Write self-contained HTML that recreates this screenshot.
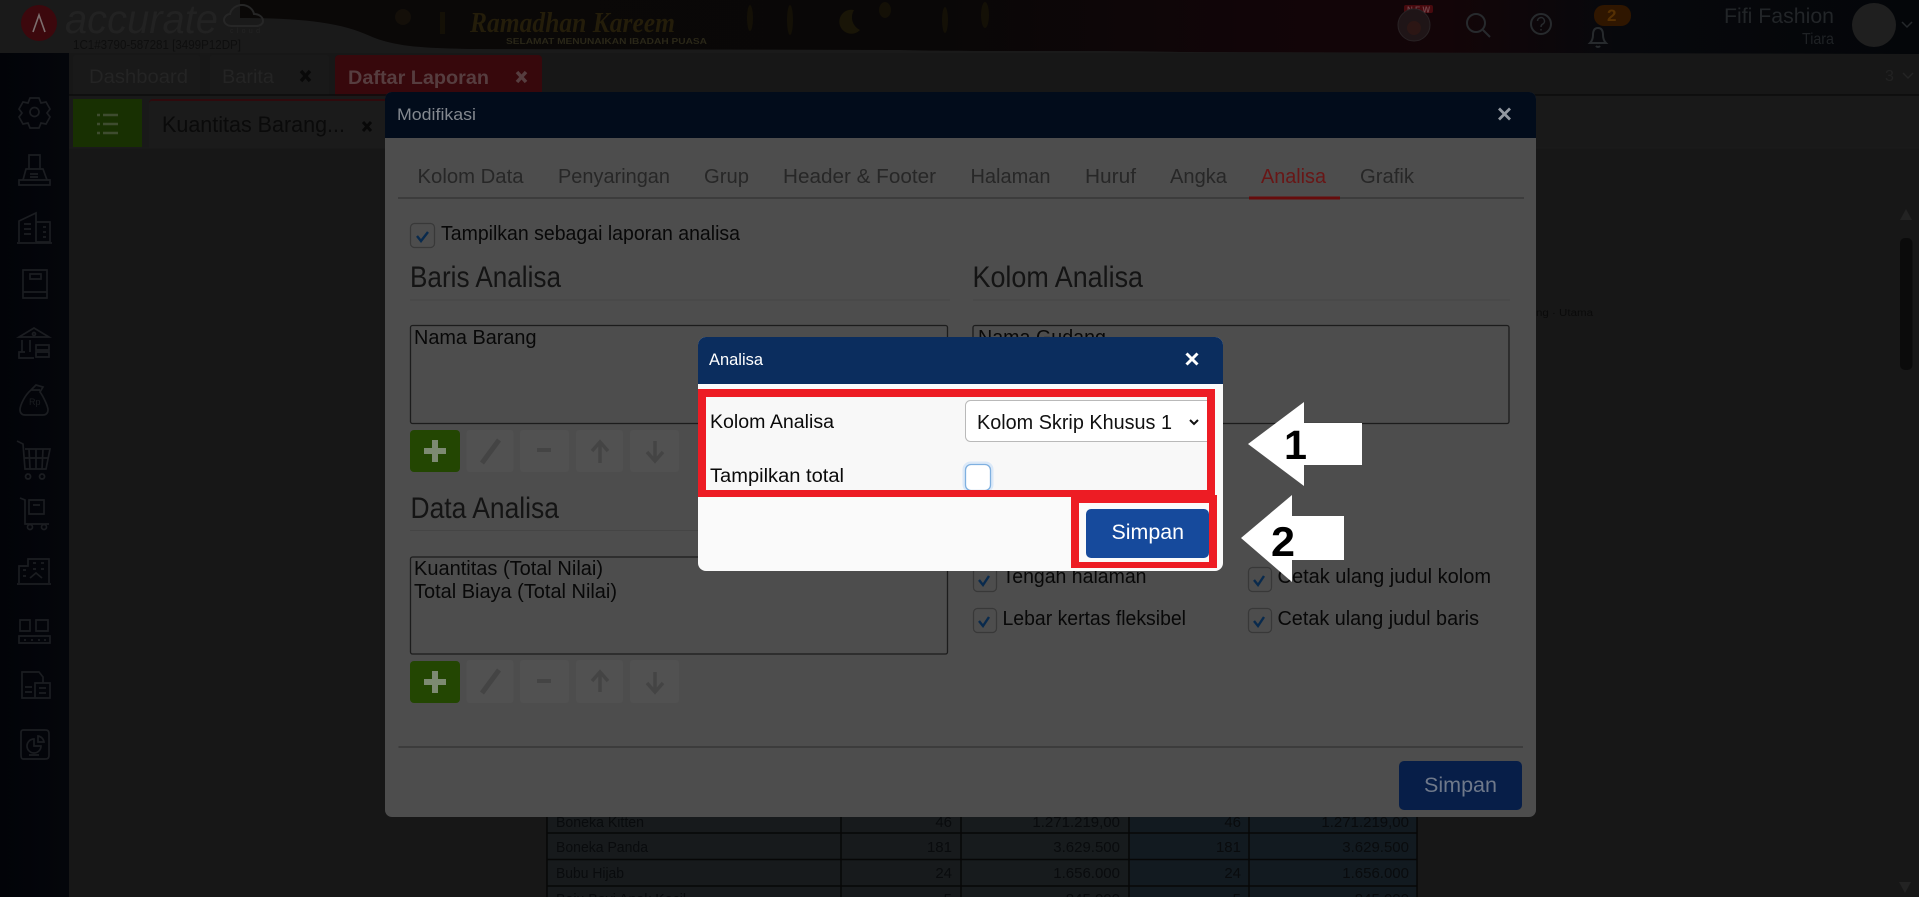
<!DOCTYPE html>
<html lang="id">
<head>
<meta charset="utf-8">
<title>Analisa</title>
<style>
html,body{margin:0;padding:0;background:#171717;width:1919px;height:897px;overflow:hidden}
svg{display:block;font-family:"Liberation Sans",sans-serif}
</style>
</head>
<body>
<svg xmlns="http://www.w3.org/2000/svg" width="1919" height="897" viewBox="0 0 1919 897">
<defs>
<linearGradient id="ban" x1="0" x2="1" y1="0" y2="0">
<stop offset="0" stop-color="#0a0807"/><stop offset=".42" stop-color="#090707"/><stop offset=".6" stop-color="#110508"/><stop offset=".72" stop-color="#130508"/><stop offset=".82" stop-color="#07080c"/><stop offset="1" stop-color="#040609"/>
</linearGradient>
<linearGradient id="side" x1="0" x2="1" y1="0" y2="0"><stop offset="0" stop-color="#020308"/><stop offset="1" stop-color="#04060b"/></linearGradient>
<clipPath id="tbl"><rect x="540" y="817" width="890" height="80"/></clipPath>
<clipPath id="d1"><rect x="706" y="397" width="501" height="93"/></clipPath>
</defs>

<!-- page -->
<rect width="1919" height="897" fill="#171717"/>
<rect x="69" y="95" width="1850" height="53" fill="#191919"/>
<line x1="69" y1="148" x2="1919" y2="148" fill="none" stroke="#1b1b1b"/>

<!-- top bar -->
<rect width="1919" height="53" fill="#1a1a1a"/>
<path d="M240 18C300 18 340 22 370 36C395 47 425 48 470 49L900 50C960 52 1100 50 1180 52L1919 54V0H310L240 0Z" fill="url(#ban)"/>
<circle cx="39" cy="23" r="18" fill="#3c080d"/>
<path d="M33 32L39 15L45 32" fill="none" stroke="#7d6e6e" stroke-width="1.600"/>
<text x="65" y="33" font-size="41" font-style="italic" fill="#222" textLength="153" lengthAdjust="spacingAndGlyphs">accurate</text>
<path d="M232 26c-5 0-8-3-8-6 0-3 3-6 6-6 1-5 6-9 12-9 6 0 11 4 12 9 5 0 9 3 9 7 0 3-3 5-7 5z" fill="none" stroke="#262626" stroke-width="2"/>
<text x="230" y="33" font-size="7" fill="#242424" textLength="30">cloud</text>
<text x="73" y="49" font-size="12.500" fill="#0e0e0e" textLength="168" lengthAdjust="spacingAndGlyphs">1C1#3790-587281 [3499P12DP]</text>
<circle cx="403" cy="17" r="8" fill="#17120a" opacity=".8"/><rect x="440" y="12" width="5" height="22" fill="#141006"/>
<text x="470" y="32" font-size="29" font-weight="bold" font-style="italic" font-family="Liberation Serif, serif" fill="#241d0a" textLength="205" lengthAdjust="spacingAndGlyphs">Ramadhan Kareem</text>
<text x="506" y="44" font-size="8.500" font-weight="bold" fill="#2a2718" textLength="201" lengthAdjust="spacingAndGlyphs">SELAMAT MENUNAIKAN IBADAH PUASA</text>
<g fill="#141006"><ellipse cx="750" cy="18" rx="3" ry="13"/><ellipse cx="790" cy="20" rx="3" ry="15"/><ellipse cx="885" cy="10" rx="6" ry="8"/><ellipse cx="945" cy="20" rx="3" ry="13"/><ellipse cx="985" cy="15" rx="4" ry="13"/></g>
<path d="M854 10a12 12 0 1 0 6 20a14 14 0 0 1-6-20z" fill="#191507"/>

<rect x="1404" y="5" width="29" height="8" rx="2" fill="#480a0e"/>
<text x="1407" y="12.500" font-size="8" font-weight="bold" fill="#70444a" textLength="23">NEW</text>
<circle cx="1414" cy="25" r="16" fill="#1f1517" stroke="#292325"/>
<circle cx="1414" cy="28" r="7" fill="#2c1614"/>
<g fill="none" stroke="#272a2d" stroke-width="2">
<circle cx="1476" cy="23" r="9"/><path d="M1483 30l7 7"/>
<circle cx="1541" cy="24" r="10"/>
<path d="M1537.500 21a3.500 3.500 0 1 1 5 3.200c-1 .6-1.500 1.300-1.500 2.800M1541 29v1.500" stroke-width="1.500"/>
<path d="M1590 43c2-2 3-4 3-8 0-5 2-7 5-7s5 2 5 7c0 4 1 6 3 8zM1596 46a2.500 2.500 0 0 0 4 0"/>
</g>
<rect x="1594" y="5" width="37" height="21" rx="10" fill="#2f1600"/>
<text x="1607" y="21" font-size="17" font-weight="bold" fill="#553003">2</text>
<text x="1724" y="23" font-size="21" fill="#222528" textLength="110" lengthAdjust="spacingAndGlyphs">Fifi Fashion</text>
<text x="1802" y="44" font-size="16" fill="#1f2225" textLength="32" lengthAdjust="spacingAndGlyphs">Tiara</text>
<ellipse cx="1874" cy="25" rx="22" ry="22" fill="#1f1f1f"/>
<path d="M1902 22l5 5 5-5" fill="none" stroke="#25282b" stroke-width="1.500"/>

<!-- sidebar -->
<rect x="0" y="53" width="69" height="844" fill="url(#side)"/>
<g fill="none" stroke="#1b1d21" stroke-width="1.700">
<path d="M30 98l9 0 2 5 5-1 4 7-3 4 3 4-4 7-5-1-2 5h-9l-2-5-5 1-4-7 3-4-3-4 4-7 5 1z"/><circle cx="34.500" cy="112" r="4.500"/>
<path d="M29 155h11v14H29zM26 169h17l4 11H23l3-11zM19 180h31v5H19zM30 174h8M30 177h8"/>
<path d="M19 242v-21l17-8v29M36 222h14v20H36M17 243h35M24 224h7M24 229h7M24 234h7M43 227h3M43 232h3M43 237h3"/>
<path d="M23 270h24v28H23zM23 292h24M30 274h11v5H30z"/>
<g transform="translate(0 -6)">
<path d="M19 343l15-9 15 9zM22 346v12M30 346v12M25 358h-6v6h15M36 351h13v5H36zM36 358h13v5H36z"/><circle cx="34" cy="340" r="1.500"/>
</g>
<path d="M31 390l5-5 7 2-3 5c3 4 8 14 8 18 0 3-2 5-5 5H25c-3 0-5-2-5-5 0-5 5-15 11-20zM31 390h9"/>
<path d="M17 441l6 3 2 25h21l4-20H25M29 449l1 20M36 449v20M43 449l-1 20M24 458h24M28 474a2.500 2.500 0 1 0 .1 0M42 474a2.500 2.500 0 1 0 .1 0"/>
<path d="M20 498l5 2v24h24M29 500h15v14H29zM33 505h7"/><circle cx="30" cy="527" r="2.500"/><circle cx="44" cy="527" r="2.500"/>
<path d="M19 583v-17h9v-7h21v24M17 584h34M23 570h3M23 576h3M33 563h3M41 563h3M33 569h3M41 569h3M30 578l6-5 6 5"/>
<path d="M20 620h10v11H20zM36 620h12v11H36zM19 636h31v7H19zM24 640h2M31 640h2M38 640h2M44 640h2"/>
<path d="M22 672h17l4 5v6h-8v15H22zM35 683h15v15H35zM25 687h7M25 692h7M39 688h7M39 693h7"/>
<path d="M23 730h22c3 0 4 1 4 4v21c0 3-1 4-4 4H23c-1 0-2-1-2-4v-23c0-1 1-2 2-2zM29 755h10"/><path d="M34 739a7 7 0 1 0 7 7h-7zM38 736a7 7 0 0 1 6 6h-6z"/>
</g>
<text x="29" y="405" font-size="9" fill="#1b1d21">Rp</text>

<!-- tabs -->
<path d="M73 95V57a2 2 0 0 1 2-2h123a2 2 0 0 1 2 2v38z" fill="#191919"/>
<path d="M210 95V57a2 2 0 0 1 2-2h115a2 2 0 0 1 2 2v38z" fill="#191919"/>
<path d="M335 96V59a4 4 0 0 1 4-4h199a4 4 0 0 1 4 4v37z" fill="#37080c"/>
<line x1="69" y1="95" x2="1919" y2="95" stroke="#0c0c0c" stroke-width="1.500"/>
<text x="89" y="83" font-size="19" fill="#242424" textLength="99" lengthAdjust="spacingAndGlyphs">Dashboard</text>
<text x="222" y="83" font-size="19" fill="#242424" textLength="52" lengthAdjust="spacingAndGlyphs">Barita</text>
<path d="M301 71l9 10M310 71l-9 10" stroke="#090909" stroke-width="3.500"/>
<text x="348" y="84" font-size="19" font-weight="bold" fill="#563d3f" textLength="141" lengthAdjust="spacingAndGlyphs">Daftar Laporan</text>
<path d="M517 72l9 10M526 72l-9 10" stroke="#563d3f" stroke-width="3.500"/>
<text x="1885" y="81" font-size="16" fill="#222">3</text>
<path d="M1903 73l5 5 5-5" fill="none" stroke="#242424" stroke-width="1.500"/>

<rect x="73" y="99" width="69" height="48" fill="#183002"/>
<g stroke="#3e4c2f" stroke-width="2.500"><path d="M103 115h15M103 124h15M103 133h15"/><path d="M97 115h3M97 124h3M97 133h3"/></g>
<path d="M149 148V103a4 4 0 0 1 4-4h232v49z" fill="#1b1b1b"/>
<path d="M149 106V103a4 4 0 0 1 4-4h232v2H153a3 3 0 0 0-4 3z" fill="#300a0d"/>
<text x="162" y="132" font-size="22" fill="#0a0a0a" textLength="183" lengthAdjust="spacingAndGlyphs">Kuantitas Barang...</text>
<path d="M363 122l8 9M371 122l-8 9" stroke="#080808" stroke-width="3"/>

<!-- scrollbar -->
<path d="M1906 209l6 11h-12z" fill="#232323"/>
<rect x="1900" y="238" width="12.500" height="132" rx="5" fill="#0b0b0b"/>
<path d="M1905 893l-6-11h12z" fill="#232323"/>
<text x="1536" y="316" font-size="10" fill="#0a0a0a" textLength="57" lengthAdjust="spacingAndGlyphs">ng · Utama</text>

<!-- table -->
<g clip-path="url(#tbl)">
<rect x="547" y="800" width="414" height="97" fill="#171a1c"/>
<rect x="961" y="800" width="168" height="97" fill="#171b1d"/>
<rect x="1129" y="800" width="288" height="97" fill="#121a20"/>
<g stroke="#070707" stroke-width="1.500">
<path d="M547 800V897M841 800V897M961 800V897M1129 800V897M1249 800V897M1417 800V897"/>
<path d="M547 833H1417M547 859.500H1417M547 886H1417"/>
</g>
<g font-size="15" fill="#090b0d">
<text x="556" y="827" textLength="88" lengthAdjust="spacingAndGlyphs">Boneka Kitten</text>
<text x="952" y="827" text-anchor="end">46</text><text x="1120" y="827" text-anchor="end">1.271.219,00</text><text x="1241" y="827" text-anchor="end">46</text><text x="1409" y="827" text-anchor="end">1.271.219,00</text>
<text x="556" y="852" textLength="92" lengthAdjust="spacingAndGlyphs">Boneka Panda</text>
<text x="952" y="852" text-anchor="end">181</text><text x="1120" y="852" text-anchor="end">3.629.500</text><text x="1241" y="852" text-anchor="end">181</text><text x="1409" y="852" text-anchor="end">3.629.500</text>
<text x="556" y="878" textLength="68" lengthAdjust="spacingAndGlyphs">Bubu Hijab</text>
<text x="952" y="878" text-anchor="end">24</text><text x="1120" y="878" text-anchor="end">1.656.000</text><text x="1241" y="878" text-anchor="end">24</text><text x="1409" y="878" text-anchor="end">1.656.000</text>
<text x="556" y="904" textLength="130" lengthAdjust="spacingAndGlyphs">Baju Bayi Anak Kecil</text>
<text x="952" y="904" text-anchor="end">5</text><text x="1120" y="904" text-anchor="end">845.000</text><text x="1241" y="904" text-anchor="end">5</text><text x="1409" y="904" text-anchor="end">845.000</text>
</g>
</g>

<!-- Modifikasi modal -->
<rect x="385" y="92" width="1151" height="725" rx="7" fill="#4d4d4d"/>
<path d="M385 138V99a7 7 0 0 1 7-7h1137a7 7 0 0 1 7 7v39z" fill="#020c1b"/>
<text x="397" y="120" font-size="17" fill="#83888f" textLength="79" lengthAdjust="spacingAndGlyphs">Modifikasi</text>
<path d="M1499 108.500l11 11M1510 108.500l-11 11" stroke="#9298a0" stroke-width="2.800"/>

<line x1="398" y1="198" x2="1524" y2="198" stroke="#333" stroke-width="1.200"/>
<rect x="1249" y="196.500" width="91" height="3" fill="#660c0c"/>
<g font-size="20" fill="#272727">
<text x="417.500" y="183" textLength="106" lengthAdjust="spacingAndGlyphs">Kolom Data</text>
<text x="558" y="183" textLength="112" lengthAdjust="spacingAndGlyphs">Penyaringan</text>
<text x="704" y="183" textLength="45" lengthAdjust="spacingAndGlyphs">Grup</text>
<text x="783" y="183" textLength="153" lengthAdjust="spacingAndGlyphs">Header &amp; Footer</text>
<text x="970.500" y="183" textLength="80" lengthAdjust="spacingAndGlyphs">Halaman</text>
<text x="1085" y="183" textLength="51" lengthAdjust="spacingAndGlyphs">Huruf</text>
<text x="1170" y="183" textLength="57" lengthAdjust="spacingAndGlyphs">Angka</text>
<text x="1261" y="183" textLength="65" lengthAdjust="spacingAndGlyphs" fill="#681616">Analisa</text>
<text x="1360" y="183" textLength="54" lengthAdjust="spacingAndGlyphs">Grafik</text>
</g>

<!-- main checkbox -->
<g fill="none" stroke="#383838" stroke-width="1.200">
<rect x="410.500" y="223.500" width="24" height="24" rx="4"/>
<rect x="973.500" y="567.500" width="23" height="24" rx="4"/>
<rect x="1248.500" y="567.500" width="23" height="24" rx="4"/>
<rect x="973.500" y="608.500" width="23" height="24" rx="4"/>
<rect x="1248.500" y="608.500" width="23" height="24" rx="4"/>
</g>
<g fill="none" stroke="#092a4d" stroke-width="2.400">
<path d="M417 236l4 5 7-9"/>
<path d="M979 580l4 5 6-9"/>
<path d="M1254 580l4 5 6-9"/>
<path d="M979 621l4 5 6-9"/>
<path d="M1254 621l4 5 6-9"/>
</g>
<g font-size="20" fill="#080808">
<text x="441" y="240" textLength="299" lengthAdjust="spacingAndGlyphs">Tampilkan sebagai laporan analisa</text>
<text x="1002.500" y="583" textLength="144" lengthAdjust="spacingAndGlyphs">Tengah halaman</text>
<text x="1277.500" y="583" textLength="213.500" lengthAdjust="spacingAndGlyphs">Cetak ulang judul kolom</text>
<text x="1002.500" y="625" textLength="183.500" lengthAdjust="spacingAndGlyphs">Lebar kertas fleksibel</text>
<text x="1277.500" y="625" textLength="201.500" lengthAdjust="spacingAndGlyphs">Cetak ulang judul baris</text>
</g>

<!-- headings -->
<g font-size="30" fill="#141414">
<text x="410" y="287" textLength="151" lengthAdjust="spacingAndGlyphs">Baris Analisa</text>
<text x="972.500" y="287" textLength="170.500" lengthAdjust="spacingAndGlyphs">Kolom Analisa</text>
<text x="410.500" y="518" textLength="148.500" lengthAdjust="spacingAndGlyphs">Data Analisa</text>
</g>
<g stroke="#454545"><path d="M410 300H950M973 300H1510M410 530.500H950"/></g>

<!-- list boxes -->
<g fill="#4d4d4d" stroke="#1c1c1c" stroke-width="1.300">
<rect x="410.500" y="325.500" width="537" height="98" rx="2"/>
<rect x="973" y="325.500" width="536" height="98" rx="2"/>
<rect x="410.500" y="557" width="537" height="97" rx="2"/>
</g>
<g font-size="20" fill="#080808">
<text x="414" y="344" textLength="122.500" lengthAdjust="spacingAndGlyphs">Nama Barang</text>
<text x="978" y="344" textLength="128" lengthAdjust="spacingAndGlyphs">Nama Gudang</text>
<text x="414" y="575" textLength="189" lengthAdjust="spacingAndGlyphs">Kuantitas (Total Nilai)</text>
<text x="414" y="598" textLength="203" lengthAdjust="spacingAndGlyphs">Total Biaya (Total Nilai)</text>
</g>

<!-- tool buttons row 1 -->
<rect x="410" y="430" width="50" height="42" rx="4" fill="#234602"/>
<path d="M435 440v22M424 451h22" stroke="#7d8a72" stroke-width="6"/>
<g fill="#515151">
<rect x="466.500" y="430" width="47" height="42" rx="3"/><rect x="520" y="430" width="49" height="42" rx="3"/><rect x="576" y="430" width="47" height="42" rx="3"/><rect x="630" y="430" width="49" height="42" rx="3"/>
</g>
<g stroke="#444" fill="none" stroke-width="4">
<path d="M482 463l17-23" stroke-width="5"/>
<path d="M537 450h14"/>
<path d="M600 463v-20M592 451l8-9 8 9" stroke-width="3.500"/>
<path d="M655 441v20M647 452l8 9 8-9" stroke-width="3.500"/>
</g>
<!-- tool buttons row 2 -->
<rect x="410" y="661" width="50" height="42" rx="4" fill="#234602"/>
<path d="M435 671v22M424 682h22" stroke="#7d8a72" stroke-width="6"/>
<g fill="#515151">
<rect x="466.500" y="660" width="47" height="43" rx="3"/><rect x="520" y="660" width="49" height="43" rx="3"/><rect x="576" y="660" width="47" height="43" rx="3"/><rect x="630" y="660" width="49" height="43" rx="3"/>
</g>
<g stroke="#444" fill="none" stroke-width="4">
<path d="M482 693l17-23" stroke-width="5"/>
<path d="M537 681h14"/>
<path d="M600 692v-20M592 681l8-9 8 9" stroke-width="3.500"/>
<path d="M655 672v20M647 683l8 9 8-9" stroke-width="3.500"/>
</g>

<line x1="398.500" y1="747" x2="1523" y2="747" stroke="#333" stroke-width="1.200"/>
<rect x="1399" y="761" width="123" height="49" rx="5" fill="#071e48"/>
<text x="1424" y="792" font-size="21" fill="#6f798a" textLength="73" lengthAdjust="spacingAndGlyphs">Simpan</text>

<!-- Analisa dialog -->
<rect x="698" y="337" width="525" height="234" rx="8" fill="#fafafa"/>
<path d="M698 384V345a8 8 0 0 1 8-8h509a8 8 0 0 1 8 8v39z" fill="#0b2d5e"/>
<text x="709" y="365" font-size="17" fill="#fff" textLength="54" lengthAdjust="spacingAndGlyphs">Analisa</text>
<path d="M1186.500 353.500l11 11M1197.500 353.500l-11 11" stroke="#fff" stroke-width="3"/>

<rect x="706" y="397" width="501" height="93" fill="#f8f8f8"/>
<text x="710" y="428" font-size="19" fill="#0a0a0a" textLength="124" lengthAdjust="spacingAndGlyphs">Kolom Analisa</text>
<text x="710" y="482" font-size="19" fill="#0a0a0a" textLength="134" lengthAdjust="spacingAndGlyphs">Tampilkan total</text>
<g clip-path="url(#d1)">
<rect x="965.500" y="400.500" width="260" height="41" rx="5" fill="#fff" stroke="#b9b9b9"/>
<rect x="962.500" y="461.500" width="31" height="31" rx="8" fill="#dbe9f8"/>
<rect x="965.500" y="464.500" width="25" height="26" rx="5.500" fill="#fff" stroke="#7fb0e0" stroke-width="1.300"/>
</g>
<text x="977" y="429" font-size="20" fill="#111" textLength="195" lengthAdjust="spacingAndGlyphs">Kolom Skrip Khusus 1</text>
<path d="M1190 420l4 4 4-4" fill="none" stroke="#111" stroke-width="2"/>

<!-- red boxes -->
<path fill-rule="evenodd" fill="#ed1c24" d="M698 389H1215V497H698ZM706 397V490H1207V397Z"/>
<path fill-rule="evenodd" fill="#ed1c24" d="M1071 495H1217V568H1071ZM1079 503V562H1209V503Z"/>
<rect x="1086" y="509" width="123" height="49" rx="5" fill="#164a9c"/>
<text x="1111.500" y="539" font-size="21" fill="#fff" textLength="72.500" lengthAdjust="spacingAndGlyphs">Simpan</text>

<!-- arrows -->
<polygon points="1248,444 1304,402 1304,423 1362,423 1362,465 1304,465 1304,486" fill="#fff"/>
<text x="1284" y="459" font-size="41" font-weight="bold" fill="#000" textLength="23" lengthAdjust="spacingAndGlyphs">1</text>
<polygon points="1241,538 1292,495 1292,516 1344,516 1344,560 1292,560 1292,582" fill="#fff"/>
<text x="1271" y="556" font-size="42" font-weight="bold" fill="#000" textLength="24" lengthAdjust="spacingAndGlyphs">2</text>
</svg>
</body>
</html>
